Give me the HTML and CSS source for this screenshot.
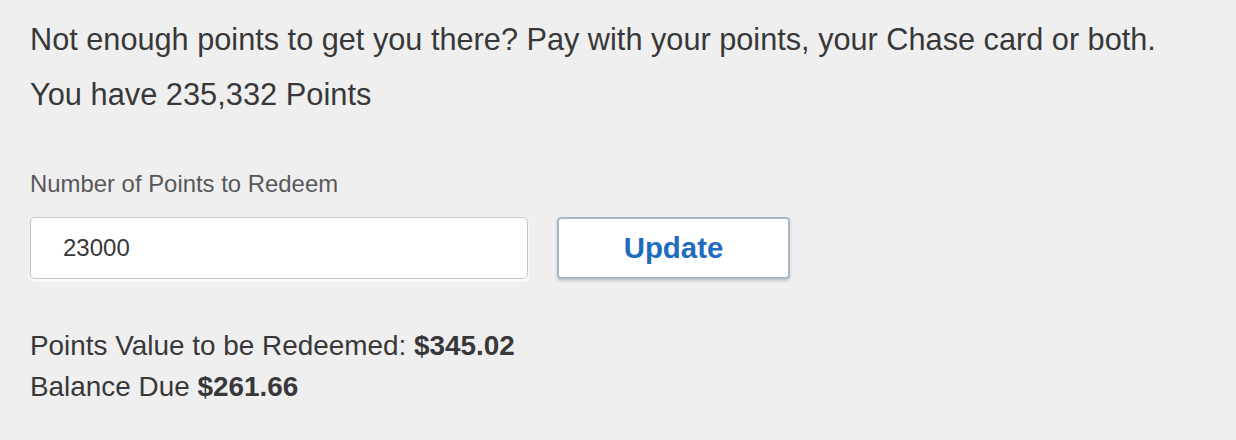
FILE: index.html
```html
<!DOCTYPE html>
<html>
<head>
<meta charset="utf-8">
<link rel="stylesheet" href="styles.css">
</head>
<body>
<div class="page">
  <p class="intro">Not enough points to get you there? Pay with your points, your Chase card or both.</p>
  <p class="have">You have 235,332 Points</p>
  <label class="label" for="pts">Number of Points to Redeem</label>
  <div class="row">
    <div class="input">23000</div>
    <button class="btn">Update</button>
  </div>
  <div class="summary">
    <p class="line">Points Value to be Redeemed: <b>$345.02</b></p>
    <p class="line">Balance Due <b>$261.66</b></p>
  </div>
</div>
</body>
</html>
```

FILE: styles.css
```css
html, body {
  margin: 0;
  padding: 0;
  background: #efefef;
}
body {
  font-family: "Liberation Sans", Arial, sans-serif;
  color: #38383a;
}
.page {
  padding: 20px 30px 0 30px;
}
.intro {
  margin: 0;
  font-size: 30.7px;
  line-height: 40px;
  white-space: nowrap;
}
.have {
  margin: 15px 0 0 0;
  font-size: 30.8px;
  line-height: 40px;
}
.label {
  display: block;
  margin-top: 55px;
  font-size: 23.9px;
  line-height: 28px;
  color: #58585a;
}
.row {
  display: flex;
  gap: 29px;
  margin-top: 19px;
}
.input {
  box-sizing: border-box;
  width: 498px;
  height: 62px;
  background: #fff;
  border: 1.5px solid #c8c8c8;
  border-radius: 5px;
  box-shadow: 1px 3px 0 #fafafa;
  padding: 0 32px;
  font-size: 24px;
  line-height: 59px;
  color: #38383a;
}
.btn {
  box-sizing: border-box;
  width: 233px;
  height: 62px;
  background: #fff;
  border: 2px solid #a9b8c7;
  border-radius: 4px;
  box-shadow: 0 2px 3px rgba(60,70,85,0.25);
  font-family: "Liberation Sans", Arial, sans-serif;
  font-weight: bold;
  font-size: 29.4px;
  color: #1f6cbf;
  padding: 0;
}
.summary {
  margin-top: 46px;
}
.line {
  margin: 0;
  font-size: 27.9px;
  line-height: 41px;
}
.line b {
  font-weight: bold;
}
```
